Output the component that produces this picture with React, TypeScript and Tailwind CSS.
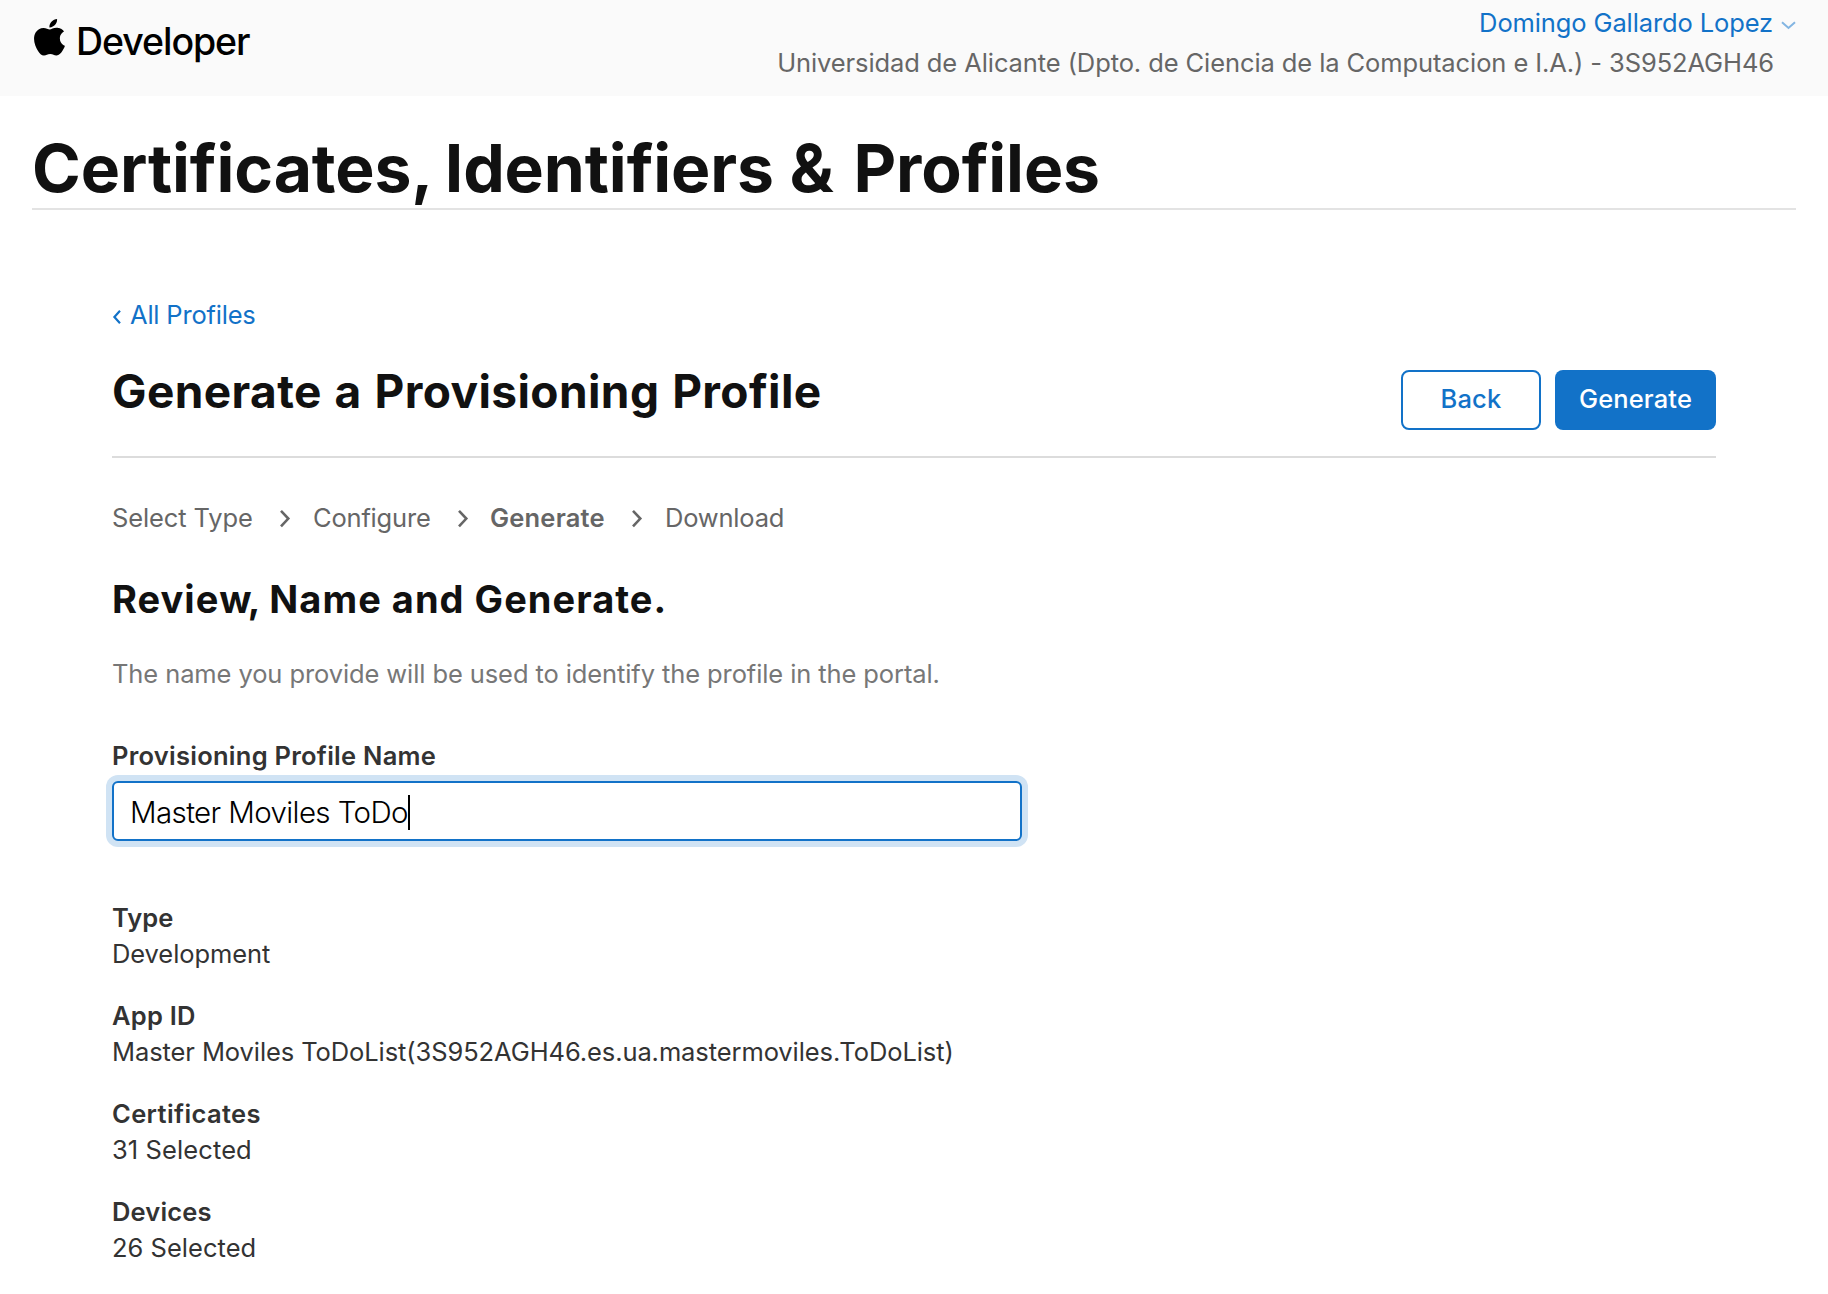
import React from "react";

const BODY = "text-[25.5px] leading-9";

function AppleLogo() {
  return (
    <svg className="mt-[19px] h-[36.5px] w-[31px] shrink-0" viewBox="2.2 0 19.6 24" preserveAspectRatio="none" fill="#000">
      <path d="M12.152 6.896c-.948 0-2.415-1.078-3.96-1.04-2.04.027-3.91 1.183-4.961 3.014-2.117 3.675-.546 9.103 1.519 12.09 1.013 1.454 2.208 3.09 3.792 3.039 1.52-.065 2.09-.987 3.935-.987 1.831 0 2.35.987 3.96.948 1.637-.026 2.676-1.48 3.676-2.948 1.156-1.688 1.636-3.325 1.662-3.415-.039-.013-3.182-1.221-3.22-4.857-.026-3.04 2.48-4.494 2.597-4.559-1.429-2.09-3.623-2.324-4.39-2.376-2-.156-3.675 1.09-4.61 1.09zM15.53 3.83c.843-1.012 1.4-2.427 1.245-3.83-1.207.052-2.662.805-3.532 1.818-.78.896-1.454 2.338-1.273 3.714 1.338.104 2.715-.688 3.559-1.701" />
    </svg>
  );
}

function StepChevron({ className }: { className: string }) {
  return (
    <svg className={`mt-[9px] h-[20px] w-3 shrink-0 ${className}`} viewBox="0 0 12 20" fill="none" stroke="#666" strokeWidth="2.6">
      <path d="M1 1.8 8.3 9.6 1 17.4" />
    </svg>
  );
}

const details = [
  { label: "Type", value: "Development", ls: "tracking-normal", vs: "tracking-[-0.08px]" },
  { label: "App ID", value: "Master Moviles ToDoList(3S952AGH46.es.ua.mastermoviles.ToDoList)", ls: "tracking-[0.23px]", vs: "tracking-[-0.09px]" },
  { label: "Certificates", value: "31 Selected", ls: "tracking-[0.37px]", vs: "tracking-[0.1px]" },
  { label: "Devices", value: "26 Selected", ls: "tracking-[0.15px]", vs: "tracking-[0.02px]" },
];

export default function App() {
  return (
    <div className="h-[1294px] overflow-hidden bg-white font-['Inter',sans-serif] text-[#333]">
      <header className="flex h-24 justify-between bg-[#fafafa] pl-[34px] pr-8">
        <div className="flex">
          <AppleLogo />
          <span className="ml-[11px] mt-[18px] text-[37.5px] font-medium leading-[48px] tracking-[-1.06px] text-black">Developer</span>
        </div>
        <div className="flex flex-col items-end pt-[3px] text-[25.5px] leading-10">
          <a className="flex tracking-[-0.12px] text-[#1272c8]">
            Domingo Gallardo Lopez
            <svg className="ml-[8px] mt-[18px] h-[9px] w-[15px]" viewBox="0 0 15 9" fill="none" stroke="#83b5e2" strokeWidth="2">
              <path d="M1 1.2 7.5 7 14 1.2" />
            </svg>
          </a>
          <span className="mr-[22px] tracking-[-0.095px] text-[#666]">
            Universidad de Alicante (Dpto. de Ciencia de la Computacion e I.A.) - 3S952AGH46
          </span>
        </div>
      </header>

      <main className="px-8 pt-8">
        <h1 className="border-b-2 border-[#e3e3e3] text-[66px] font-bold leading-[80px] tracking-[-0.111px] text-[#111]">
          Certificates<span className="tracking-[-4.2px]">,</span> Identifiers <span className="tracking-[2px]">&amp; </span>Profiles
        </h1>

        <div className="px-20 pt-[87px]">
          <a className={`flex ${BODY} tracking-[-0.2px] text-[#1272c8]`}>
            <svg className="mr-[8px] mt-[13px] h-[14px] w-[10px]" viewBox="0 0 10 14" fill="none" stroke="currentColor" strokeWidth="2.2">
              <path d="M8 .8 2.4 7 8 13.2" />
            </svg>
            All Profiles
          </a>

          <div className="mt-[30px] flex h-[95px] justify-between border-b-2 border-[#dcdcdc]">
            <h2 className="text-[46px] font-bold leading-[56px] tracking-[0.4px] text-[#111] [word-spacing:1.5px]">Generate a Provisioning Profile</h2>
            <div className="mt-[7px] flex h-[60px] gap-[14px] text-[25.5px] font-medium">
              <button className="w-[140px] rounded-lg border-2 border-[#1272c8] bg-white pb-0.5 tracking-[0.185px] text-[#1272c8]">Back</button>
              <button className="w-[161px] rounded-lg bg-[#1272c8] pb-0.5 tracking-[0.14px] text-white">Generate</button>
            </div>
          </div>

          <nav className={`mt-[42px] flex ${BODY} text-[#666]`}>
            <span className="w-[168px] tracking-[-0.116px]">Select Type</span>
            <StepChevron className="mr-[21px]" />
            <span className="w-[145px] tracking-[-0.2px]">Configure</span>
            <StepChevron className="mr-[20px]" />
            <span className="w-[142px] font-semibold tracking-[0.194px]">Generate</span>
            <StepChevron className="mr-[21px]" />
            <span className="tracking-[-0.2px]">Download</span>
          </nav>

          <h3 className="mt-[39px] text-[38px] font-bold leading-[48px] tracking-[1.03px] text-[#111]">
            Revie<span className="tracking-[-1.1px]">w,</span> Name and Generate.
          </h3>
          <p className={`mt-[33px] ${BODY} tracking-[-0.1px] text-[#777]`}>
            The name you provide will be used to identify the profile in the portal.
          </p>

          <label className={`mt-[46px] block ${BODY} font-semibold tracking-[0.26px]`}>Provisioning Profile Name</label>
          <div className="mt-[7px] flex h-[60px] w-[910px] rounded-md border-2 border-[#1272c8] bg-white pl-4 shadow-[0_0_0_6px_#d0e3f4]">
            <span className="mt-px text-[29.5px] font-light leading-[56px] tracking-[-0.609px] text-black">Master Moviles ToDo</span>
            <span className="mt-[12px] h-[35px] w-[2px] bg-black" />
          </div>

          <dl className="mt-[59px] flex flex-col gap-[26px]">
            {details.map((d) => (
              <div key={d.label} className={BODY}>
                <dt className={`font-semibold ${d.ls}`}>{d.label}</dt>
                <dd className={d.vs}>{d.value}</dd>
              </div>
            ))}
          </dl>
        </div>
      </main>
    </div>
  );
}
